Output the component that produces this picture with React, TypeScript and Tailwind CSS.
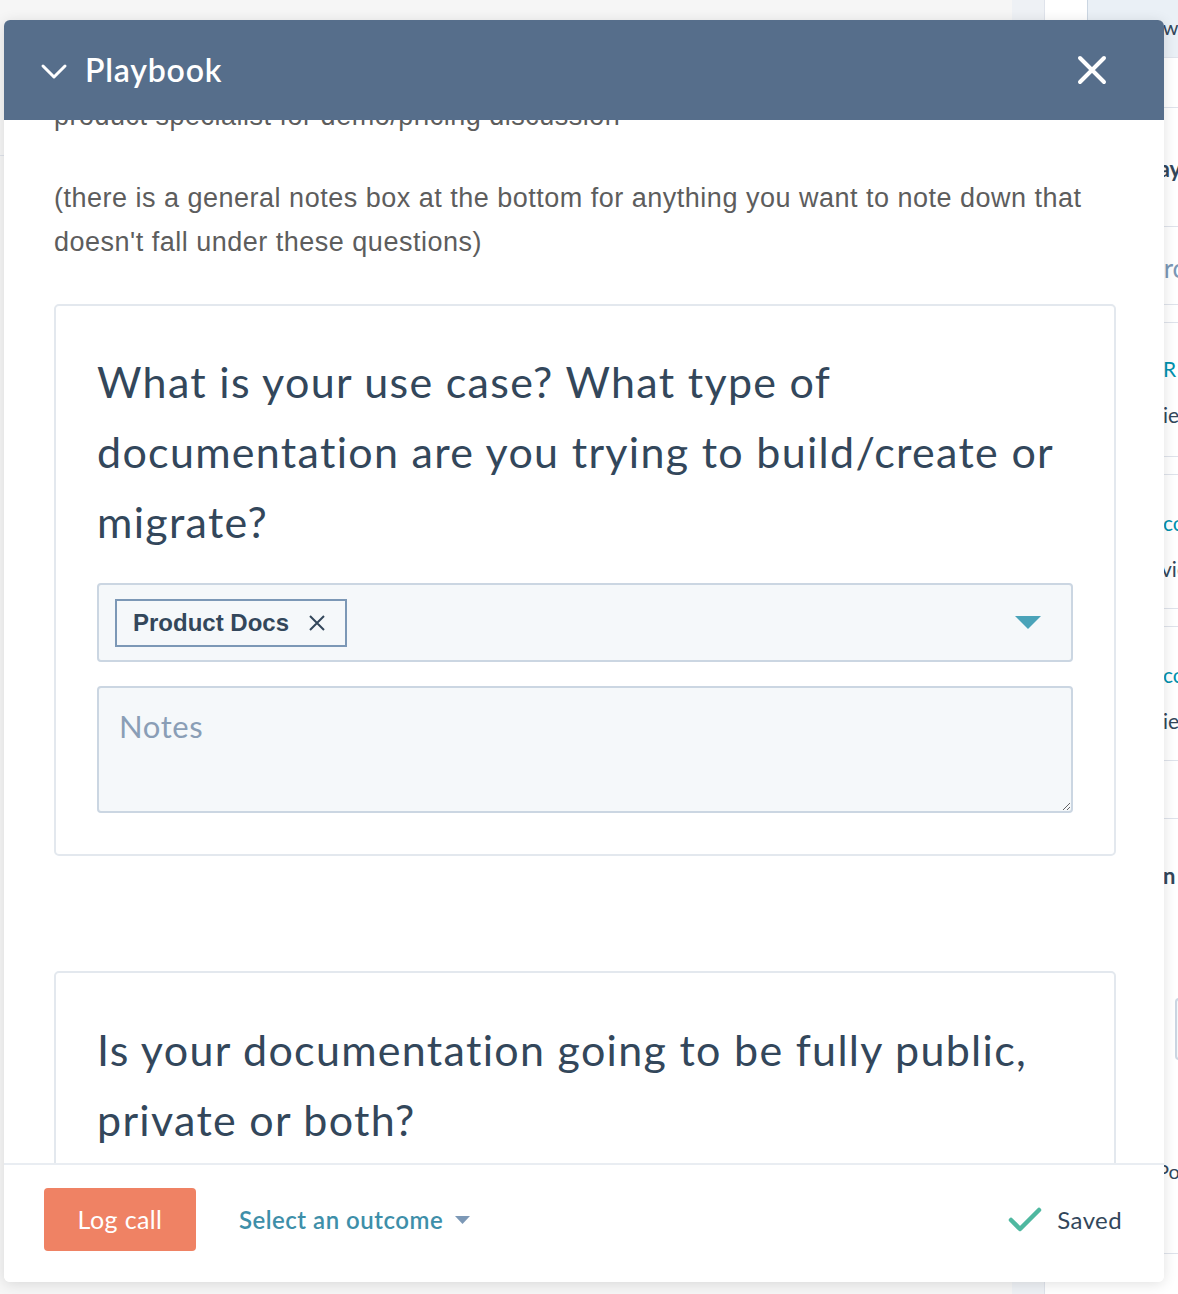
import React from 'react';

const sans = "font-['Lato','Noto_Sans',sans-serif]";
const helv = "font-['Liberation_Sans','Arial',sans-serif]";

function SideRail() {
  return (
    <div className="w-[166px] shrink-0 flex h-full">
      <div className="w-[33px] shrink-0 bg-[#eef1f5] border-r border-[#dfe3eb]" />
      <div className={`flex-1 min-w-0 overflow-hidden bg-white flex flex-col whitespace-nowrap ${sans}`}>
        <div className="h-[58px] shrink-0 border-b border-[#dfe3eb] pl-[42px]">
          <div className="h-full bg-[#eaf0f6] border-l border-[#cbd6e2] pl-[46px] pt-[12px] text-[#33475b] text-[20px]">View</div>
        </div>
        <div className="h-[50px] shrink-0 border-b border-[#dfe3eb]" />
        <div className="h-[119px] shrink-0 border-b border-[#dfe3eb] pl-[78px] pt-[44px] text-[22px] font-bold text-[#33475b]">Today</div>
        <div className="h-[78px] shrink-0 border-b border-[#dfe3eb] pl-[78px] pt-[22px] text-[26px] text-[#7c98b6]">Search</div>
        <div className="h-[18px] shrink-0 border-b border-[#dfe3eb]" />
        <div className="h-[134px] shrink-0 border-b border-[#dfe3eb] pl-[118px] pt-[30px] flex flex-col gap-[14px] text-[21px]">
          <span className="text-[#0091ae]">R</span>
          <span className="text-[#33475b] -ml-[30px]">Series</span>
        </div>
        <div className="h-[18px] shrink-0 border-b border-[#dfe3eb]" />
        <div className="h-[134px] shrink-0 border-b border-[#dfe3eb] pl-[118px] pt-[32px] flex flex-col gap-[14px] text-[21px]">
          <span className="text-[#0091ae]">co</span>
          <span className="text-[#33475b] -ml-[2px]">view</span>
        </div>
        <div className="h-[18px] shrink-0 border-b border-[#dfe3eb]" />
        <div className="h-[134px] shrink-0 border-b border-[#dfe3eb] pl-[118px] pt-[32px] flex flex-col gap-[14px] text-[21px]">
          <span className="text-[#0091ae]">co</span>
          <span className="text-[#33475b] -ml-[30px]">Series</span>
        </div>
        <div className="h-[58px] shrink-0 border-b border-[#dfe3eb]" />
        <div className="pl-[118px] pt-[40px] text-[22px] font-bold text-[#33475b]">n</div>
        <div className="ml-[130px] mt-[106px] h-[62px] w-[40px] shrink-0 border-2 border-[#cbd6e2] rounded bg-[#f5f8fa]" />
        <div className="pl-[112px] mt-[96px] pb-[67px] border-b border-[#dfe3eb] text-[20px] text-[#33475b]">Port</div>
      </div>
    </div>
  );
}

export default function App() {
  return (
    <div className="relative w-[1178px] h-[1294px] overflow-hidden bg-[#f4f5f6]">
      <div className="flex h-full">
        <div className="flex-1 bg-[#f6f6f6]">
          <div className="mt-[155px] border-t border-[#dfe3eb]" />
        </div>
        <SideRail />
      </div>

      <div className="absolute left-[4px] top-[20px] w-[1160px] h-[1262px] flex flex-col bg-white rounded-[6px] shadow-[0_2px_14px_rgba(0,0,0,0.12)] overflow-hidden">
        <div className={`relative z-10 h-[100px] shrink-0 bg-[#566e8b] flex items-center pl-[36px] pr-[56px] ${sans}`}>
          <svg width="28" height="28" viewBox="0 0 28 28" className="mr-[17px] mt-[2px]">
            <path d="M3 9 L14 20 L25 9" fill="none" stroke="#fff" strokeWidth="3" strokeLinecap="round" strokeLinejoin="round" />
          </svg>
          <span className="text-white text-[32px] font-semibold tracking-[0.8px]">Playbook</span>
          <svg width="32" height="32" viewBox="0 0 32 32" className="ml-auto">
            <path d="M4 4 L28 28 M28 4 L4 28" stroke="#fff" strokeWidth="4" strokeLinecap="round" />
          </svg>
        </div>

        <div className="flex-1 overflow-hidden">
          <div className="-mt-[26px] pl-[50px] pr-[48px]">
            <div className={`${helv} text-[27px] leading-[44px] tracking-[0.5px] text-[#5d5d5d]`}>
              <p>product specialist for demo/pricing discussion</p>
              <p className="h-[38px]">&nbsp;</p>
              <p>(there is a general notes box at the bottom for anything you want to note down that doesn't fall under these questions)</p>
            </div>

            <div className="mt-[40px] border-2 border-[#e3e8ee] rounded-[5px] px-[41px] pt-[41px] pb-[41px]">
              <h3 className={`${sans} text-[43px] leading-[70px] text-[#33475b] tracking-[1.3px]`}>
                What is your use case? What type of documentation are you trying to build/create or migrate?
              </h3>
              <div className="mt-[26px] h-[79px] bg-[#f5f8fa] border-2 border-[#cbd6e2] rounded-[4px] flex items-center pl-[16px] pr-[30px]">
                <div className={`h-[48px] border-2 border-[#7c98b6] bg-[#f5f8fa] flex items-center pl-[16px] pr-[19px] gap-[19px] ${helv}`}>
                  <span className="text-[24px] font-bold text-[#33475b]">Product Docs</span>
                  <svg width="18" height="18" viewBox="0 0 18 18">
                    <path d="M2 2 L16 16 M16 2 L2 16" stroke="#33475b" strokeWidth="2" />
                  </svg>
                </div>
                <svg width="26" height="13" viewBox="0 0 26 13" className="ml-auto">
                  <path d="M0 0 L26 0 L13 13 Z" fill="#4aa3b9" />
                </svg>
              </div>
              <textarea
                placeholder="Notes"
                className={`mt-[24px] block w-full h-[127px] bg-[#f5f8fa] border-2 border-[#cbd6e2] rounded-[4px] px-[20px] pt-[18px] text-[31px] leading-[40px] tracking-[0.6px] text-[#33475b] placeholder:text-[#8a9eb6] outline-none ${sans}`}
              />
            </div>

            <div className="mt-[115px] border-2 border-[#e3e8ee] rounded-[5px] px-[41px] pt-[42px] pb-[60px]">
              <h3 className={`${sans} text-[43px] leading-[70px] text-[#33475b] tracking-[1.3px]`}>
                Is your documentation going to be fully public, private or both?
              </h3>
            </div>
          </div>
        </div>

        <div className={`h-[119px] shrink-0 bg-white border-t-2 border-[#e9edf2] flex items-start pt-[23px] pl-[40px] pr-[42px] ${sans}`}>
          <button className="w-[152px] h-[63px] rounded-[4px] bg-[#ef8264] text-white text-[25px] tracking-[0.4px]">Log call</button>
          <button className="ml-[43px] h-[63px] flex items-center gap-[12px] text-[#3e8fa9] text-[24px] font-semibold tracking-[0.5px]">
            Select an outcome
            <svg width="15" height="8" viewBox="0 0 15 8">
              <path d="M0 0 L15 0 L7.5 8 Z" fill="#7c98b6" />
            </svg>
          </button>
          <div className="ml-auto h-[63px] flex items-center gap-[15px]">
            <svg width="34" height="28" viewBox="0 0 34 28">
              <path d="M3 14 L12 23 L31 4" fill="none" stroke="#4fb8a0" strokeWidth="4.5" strokeLinecap="round" strokeLinejoin="round" />
            </svg>
            <span className="text-[24px] text-[#33475b] tracking-[0.4px]">Saved</span>
          </div>
        </div>
      </div>
    </div>
  );
}
